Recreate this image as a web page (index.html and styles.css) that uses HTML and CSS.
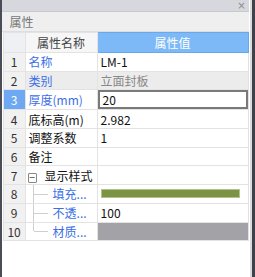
FILE: index.html
```html
<!DOCTYPE html>
<html lang="zh-CN">

<head>
  <meta charset="UTF-8">
  <title>属性</title>
  <link rel="stylesheet" href="styles.css">
</head>

<body>
  <div class="window">
    <div class="edge-left"></div>
    <div class="main">
      <div class="titlebar"><span class="close">×</span></div>
      <div class="tab">属性</div>
      <table class="props">
        <thead>
          <tr>
            <th class="num"></th>
            <th class="name">属性名称</th>
            <th class="val">属性值</th>
          </tr>
        </thead>
        <tbody>
          <tr>
            <td class="num">1</td>
            <td class="name blue">名称</td>
            <td class="val">LM-1</td>
          </tr>
          <tr class="readonly">
            <td class="num">2</td>
            <td class="name blue">类别</td>
            <td class="val">立面封板</td>
          </tr>
          <tr class="selected">
            <td class="num">3</td>
            <td class="name blue">厚度(mm)</td>
            <td class="val"><div class="edit">20</div></td>
          </tr>
          <tr>
            <td class="num">4</td>
            <td class="name">底标高(m)</td>
            <td class="val">2.982</td>
          </tr>
          <tr>
            <td class="num">5</td>
            <td class="name">调整系数</td>
            <td class="val">1</td>
          </tr>
          <tr>
            <td class="num">6</td>
            <td class="name">备注</td>
            <td class="val"></td>
          </tr>
          <tr>
            <td class="num">7</td>
            <td class="name group"><span class="toggle">−</span>显示样式</td>
            <td class="val"></td>
          </tr>
          <tr>
            <td class="num">8</td>
            <td class="name child blue"><span class="branch"></span>填充...</td>
            <td class="val"><div class="fill-bar"></div></td>
          </tr>
          <tr>
            <td class="num">9</td>
            <td class="name child blue"><span class="branch"></span>不透...</td>
            <td class="val">100</td>
          </tr>
          <tr>
            <td class="num">10</td>
            <td class="name child last blue"><span class="branch"></span>材质...</td>
            <td class="val material"></td>
          </tr>
        </tbody>
      </table>
    </div>
    <div class="scroll-edge"></div>
    <div class="edge-right"></div>
  </div>
</body>

</html>
```

FILE: styles.css
```css
body {
  margin: 0;
  width: 255px;
  height: 277px;
  overflow: hidden;
  background: #fff;
  font-family: "Noto Sans CJK SC", "Liberation Sans", sans-serif;
  font-size: 12px;
}

.window {
  display: flex;
  height: 277px;
}

.edge-left {
  width: 2px;
  background: #4a4d55;
}

.edge-right {
  width: 4px;
  background: #3f424a;
}

.scroll-edge {
  width: 3px;
  background: #fff;
  border-left: 1px solid #fff;
  box-shadow: inset -2px 0 0 #dcdcdc;
}

.main {
  flex: 1;
  display: flex;
  flex-direction: column;
}

.titlebar {
  height: 11px;
  background: #d7d8de;
  border-bottom: 1px solid #c9cad0;
  display: flex;
  justify-content: flex-end;
  align-items: center;
}

.close {
  font-family: "DejaVu Sans", sans-serif;
  font-size: 10px;
  line-height: 10px;
  color: #8a8a8a;
  margin-right: 3px;
}

.tab {
  height: 19px;
  line-height: 19px;
  background: #efefef;
  border-bottom: 1px solid #dedede;
  color: #777;
  padding-left: 8px;
}

.props {
  border-collapse: collapse;
  table-layout: fixed;
  width: 246px;
  margin-left: 1px;
}

.props th,
.props td {
  padding: 0;
  border: 1px solid #e3e3e3;
  white-space: nowrap;
  overflow: hidden;
}

.props th {
  height: 19px;
  font-weight: normal;
  color: #444;
  background: #f6f6f6;
}

.props th.num {
  width: 21px;
  background: #eef0f4;
}

.props th.name {
  width: 71px;
}

.props th.val {
  background: #7db9f7;
  color: #fff;
  border-color: #6aa8ec;
}

.props td {
  height: 17.7px;
  color: #111;
}

.props td.num {
  background: #f1f1f1;
  text-align: center;
  color: #333;
}

.props td.name {
  padding-left: 3px;
}

.props td.val {
  padding-left: 3px;
}

.blue {
  color: #3b6fe6 !important;
}

.readonly td.name,
.readonly td.val {
  background: #ececec;
}

.readonly td.val {
  color: #888;
}

.selected td.num {
  background: #6ea8f3;
  color: #fff;
}

.selected td.val {
  padding: 0;
}

.edit {
  height: 15px;
  line-height: 15px;
  border: 2px solid #7a7a7a;
  padding-left: 3px;
}

.group {
  display: flex;
  align-items: center;
}

.props td.group {
  display: table-cell;
  padding-left: 2px;
}

.toggle {
  display: inline-block;
  width: 7px;
  height: 8px;
  line-height: 7px;
  border: 1px solid #888;
  border-radius: 1px;
  font-family: "DejaVu Sans", sans-serif;
  font-size: 8px;
  text-align: center;
  color: #333;
  margin-right: 8px;
  vertical-align: 1px;
}

.props td.child {
  position: relative;
  padding-left: 27px;
}

.branch {
  position: absolute;
  left: 7px;
  top: 0;
  bottom: 0;
  width: 14px;
  border-left: 1px solid #cfcfcf;
}

.branch::after {
  content: "";
  position: absolute;
  left: 0;
  right: 0;
  top: 50%;
  border-top: 1px solid #cfcfcf;
}

.child.last .branch {
  bottom: 50%;
}

.child.last .branch::after {
  top: 100%;
}

.fill-bar {
  height: 7px;
  margin-right: 8px;
  background: #7a9443;
  border: 1px solid #b3c28e;
}

.props td.material {
  background: #a3a2a7;
}
```
